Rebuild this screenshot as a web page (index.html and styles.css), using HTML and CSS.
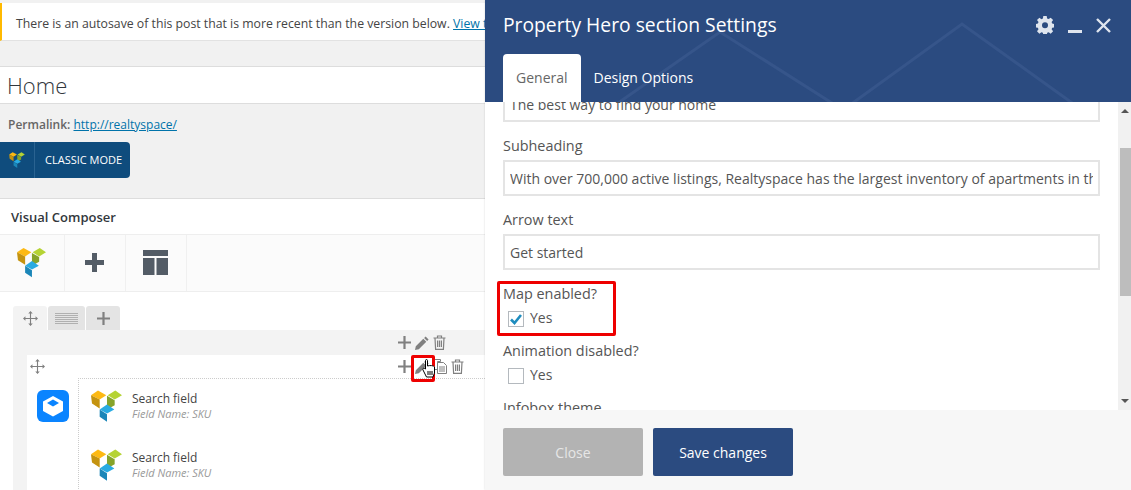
FILE: index.html
```html
<!DOCTYPE html>
<html lang="en">
<head>
    <meta charset="UTF-8">
    <meta name="viewport" content="width=device-width, initial-scale=1.0">
    <title>Edit Page</title>
    <link rel="stylesheet" href="styles.css">
</head>
<body>

    <svg class="defs" width="0" height="0">
        <symbol id="vc" viewBox="0 0 93 95">
            <polygon fill="#fdb913" points="0,15 21,1 46,15 26,28"/>
            <polygon fill="#c4930f" points="0,15 26,28 26,55 3,40"/>
            <polygon fill="#b5d334" points="50,15 73,1 93,15 71,28"/>
            <polygon fill="#86a32a" points="48,17 71,30 71,45 48,58"/>
            <polygon fill="#29abe2" points="26,58 48,43 70,58 48,70"/>
            <polygon fill="#1b86b8" points="26,58 48,72 48,95 26,80"/>
        </symbol>
        <symbol id="move" viewBox="0 0 16 16">
            <path fill="#808080" d="M8 0l2.400 2.600H8.600v4.800h4.800V5.600L16 8l-2.600 2.400V8.600H8.600v4.800h1.800L8 16l-2.400-2.600h1.800V8.600H2.600v1.800L0 8l2.600-2.400v1.800h4.800V2.600H5.600z"/>
        </symbol>
        <symbol id="plus" viewBox="0 0 13 13">
            <path fill="#808080" d="M5.400 0h2.200v5.400H13v2.200H7.600V13H5.400V7.600H0V5.400h5.400z"/>
        </symbol>
        <symbol id="pencil" viewBox="0 0 14 14">
            <path fill="#808080" d="M10.600.4l3 3-1.500 1.500-3-3zM8.300 2.700l3 3-7.500 7.500L0 14l.8-3.800z"/>
        </symbol>
        <symbol id="trash" viewBox="0 0 13 15">
            <path fill="none" stroke="#808080" stroke-width="1.200" d="M.5 3h12M4.500 3V1h4v2M2 3l.6 11.400h7.800L11 3M4.600 5.500v6.500M6.500 5.500v6.500M8.400 5.500v6.500"/>
        </symbol>
        <symbol id="copy" viewBox="0 0 14 15">
            <path fill="#fff" stroke="#808080" d="M.5.500h7v2h-3v8h-4z"/>
            <path fill="#fff" stroke="#808080" d="M4.500 3.500h6l3 3v8h-9z"/>
            <path stroke="#808080" d="M6 8h6M6 10h6M6 12h6"/>
        </symbol>
    </svg>

    <div class="page">
        <div class="notice">There is an autosave of this post that is more recent than the version below. <a href="#">View the autosave</a></div>

        <div class="title-row">Home</div>

        <div class="permalink"><b>Permalink:</b> <a href="#">http://realtyspace/</a></div>

        <div class="mode-wrap">
            <div class="mode-btn">
                <span class="mode-icon"><svg width="16" height="16"><use href="#vc"/></svg></span>
                <span class="mode-text">CLASSIC MODE</span>
            </div>
        </div>

        <div class="composer">
            <div class="composer-head">Visual Composer</div>
            <div class="toolbar">
                <div class="tool"><svg width="29" height="31"><use href="#vc"/></svg></div>
                <div class="tool">
                    <svg width="19" height="19" viewBox="0 0 19 19"><path fill="#535c66" d="M7 0h5v7h7v5h-7v7H7v-7H0V7h7z"/></svg>
                </div>
                <div class="tool">
                    <svg width="25" height="25" viewBox="0 0 25 25"><path fill="#535c66" d="M0 0h25v6H0zM0 8h11.500v17H0zM13.500 8H25v17H13.500z"/></svg>
                </div>
            </div>

            <div class="canvas">
                <div class="row-tabs">
                    <div class="row-tab first"><svg width="15" height="15"><use href="#move"/></svg></div>
                    <div class="row-tab lines"><span></span></div>
                    <div class="row-tab"><svg width="13" height="13"><use href="#plus"/></svg></div>
                </div>
                <div class="row">
                    <div class="actions">
                        <svg width="13" height="13"><use href="#plus"/></svg>
                        <svg width="14" height="14"><use href="#pencil"/></svg>
                        <svg width="13" height="15"><use href="#trash"/></svg>
                    </div>
                    <div class="inner">
                        <div class="inner-top">
                            <svg width="15" height="15"><use href="#move"/></svg>
                            <div class="actions">
                                <svg width="13" height="13"><use href="#plus"/></svg>
                                <svg width="14" height="14"><use href="#pencil"/></svg>
                                <svg width="14" height="15"><use href="#copy"/></svg>
                                <svg width="13" height="15"><use href="#trash"/></svg>
                            </div>
                        </div>
                        <div class="inner-body">
                            <div class="cube-col">
                                <svg width="32" height="32" viewBox="0 0 32 32">
                                    <rect width="32" height="32" rx="6" fill="#0a84ff"/>
                                    <polygon fill="#fff" points="16,6 26,11.500 26,21 16,26.500 6,21 6,11.500"/>
                                    <polygon fill="#0a84ff" points="16,9.500 22,13 16,16.500 10,13"/>
                                </svg>
                            </div>
                            <div class="fields">
                                <div class="field">
                                    <svg width="31" height="32"><use href="#vc"/></svg>
                                    <div>
                                        <div class="field-name">Search field</div>
                                        <div class="field-sub">Field Name: SKU</div>
                                    </div>
                                </div>
                                <div class="field">
                                    <svg width="31" height="32"><use href="#vc"/></svg>
                                    <div>
                                        <div class="field-name">Search field</div>
                                        <div class="field-sub">Field Name: SKU</div>
                                    </div>
                                </div>
                            </div>
                        </div>
                    </div>
                </div>
            </div>
        </div>
    </div>

    <div class="mark mark-edit"></div>
    <svg class="hand" width="14" height="20" viewBox="0 0 14 20">
        <path fill="#fff" stroke="#000" d="M3.500 1.500c0-1.300 2-1.300 2 0v5.500c2-.8 6.500-.6 7 1v6l-1.500 4H4.500L1 11c-.8-1.500.8-2.500 2.500-1z"/>
        <path stroke="#000" d="M6 12v4M8 12v4M10 12v4"/>
    </svg>

    <div class="modal">
        <div class="modal-head">
            <svg class="modal-deco" width="646" height="102" viewBox="0 0 646 102">
                <path fill="none" stroke="#36558a" stroke-width="3" d="M123 110L235 32L358 110L477 24L597 110M358 102V110"/>
            </svg>
            <div class="modal-top">
                <h1>Property Hero section Settings</h1>
                <div class="modal-icons">
                    <svg width="18" height="18" viewBox="0 0 18 18">
                        <path fill="#dfe5ee" fill-rule="evenodd" d="M7.300 0h3.400l.4 2.500 1.500.6L14.700 1.700l2.400 2.400-1.500 2 .6 1.500 2.500.4v3.400l-2.500.4-.6 1.500 1.500 2-2.400 2.400-2-1.500-1.500.6-.4 2.500H7.300l-.4-2.500-1.500-.6-2 1.500-2.400-2.400 1.500-2-.6-1.500-2.500-.4V8l2.500-.4.6-1.500-1.500-2 2.400-2.400 2 1.500 1.500-.6zM9 6.300a3 3 0 1 0 0 6 3 3 0 0 0 0-6z"/>
                    </svg>
                    <span class="minimize"></span>
                    <svg width="15" height="15" viewBox="0 0 15 15"><path fill="none" stroke="#dfe5ee" stroke-width="2.400" d="M1 1l13 13M14 1L1 14"/></svg>
                </div>
            </div>
            <div class="modal-tabs">
                <div class="modal-tab active">General</div>
                <div class="modal-tab">Design Options</div>
            </div>
        </div>

        <div class="modal-body">
            <div class="form">
                <div class="text-input"><span>The best way to find your home</span></div>
                <label class="form-label">Subheading</label>
                <div class="text-input"><span>With over 700,000 active listings, Realtyspace has the largest inventory of apartments in the United States</span></div>
                <label class="form-label">Arrow text</label>
                <div class="text-input"><span>Get started</span></div>
                <label class="form-label">Map enabled?</label>
                <div class="check-row">
                    <span class="check">
                        <svg width="12" height="11" viewBox="0 0 12 11"><path fill="none" stroke="#1e8cbe" stroke-width="2.600" d="M1 5.500l3.500 3.500L11 1"/></svg>
                    </span>
                    Yes
                </div>
                <label class="form-label">Animation disabled?</label>
                <div class="check-row">
                    <span class="check"></span>
                    Yes
                </div>
                <label class="form-label">Infobox theme</label>
            </div>
            <div class="scrollbar">
                <span class="arrow up"></span>
                <span class="track"><span class="thumb"></span></span>
                <span class="arrow down"></span>
            </div>
        </div>

        <div class="modal-foot">
            <button class="btn btn-close">Close</button>
            <button class="btn btn-save">Save changes</button>
        </div>
    </div>

    <div class="mark mark-map"></div>

</body>
</html>
```

FILE: styles.css
```css
* {
    box-sizing: border-box;
}
html, body {
    height: 490px;
}
body {
    margin: 0;
    overflow: hidden;
    position: relative;
    background-color: #f1f1f1;
    font-family: "Open Sans", Arial, sans-serif;
    color: #444;
}
a {
    color: #0073aa;
}
.defs {
    position: absolute;
}
.page {
    width: 485px;
    height: 490px;
    padding-top: 3px;
    overflow: hidden;
}

/* left side, wp editor */
.notice {
    height: 38px;
    padding-left: 14px;
    background-color: #fff;
    border-left: 2px solid #ffb900;
    border-bottom: 1px solid #e2e2e2;
    font-size: 12.280px;
    line-height: 41px;
    white-space: nowrap;
    overflow: hidden;
}
.title-row {
    height: 38px;
    margin-top: 25px;
    padding-left: 7px;
    background-color: #fff;
    border-top: 1px solid #ddd;
    border-bottom: 1px solid #ddd;
    font-size: 22px;
    font-weight: 300;
    line-height: 37px;
    color: #32373c;
}
.permalink {
    margin-top: 12px;
    padding-left: 8px;
    font-size: 12px;
    line-height: 18px;
    color: #666;
}
.permalink b {
    font-weight: 600;
}
.mode-wrap {
    margin-top: 8px;
    height: 57px;
    border-bottom: 1px solid #ddd;
}
.mode-btn {
    display: flex;
    width: 130px;
    height: 36px;
    background-color: #0f4c7d;
    border-radius: 0 4px 4px 0;
    color: #fff;
}
.mode-icon {
    display: flex;
    align-items: center;
    justify-content: center;
    width: 35px;
    border-right: 1px solid #2a6391;
}
.mode-text {
    padding-left: 10px;
    font-size: 11px;
    line-height: 36px;
}
.composer {
    background-color: #fff;
}
.composer-head {
    height: 35px;
    padding-left: 11px;
    font-size: 13px;
    font-weight: 600;
    line-height: 36px;
    color: #32373c;
}
.toolbar {
    display: flex;
    height: 58px;
    background-color: #fbfbfb;
    border-top: 1px solid #eee;
    border-bottom: 1px solid #eee;
}
.tool {
    display: flex;
    align-items: center;
    justify-content: center;
    width: 61px;
    padding: 0 1px 1px 0;
    border-right: 1px solid #f0f0f0;
}
.tool:first-child {
    width: 65px;
}
.canvas {
    height: 198px;
    padding: 14px 0 0 13px;
}
.row-tabs {
    display: flex;
    gap: 1px;
    height: 24px;
}
.row-tab {
    display: flex;
    align-items: center;
    justify-content: center;
    width: 34px;
    background-color: #e4e4e4;
    border-radius: 3px 3px 0 0;
}
.row-tab.first {
    background-color: #f3f3f3;
}
.row-tab.lines {
    width: 37px;
}
.row-tab.lines span {
    width: 23px;
    height: 11px;
    background: repeating-linear-gradient(#b0b0b0 0 1px, transparent 1px 2px);
}
.row {
    height: 175px;
    padding-left: 14px;
    background-color: #f3f3f3;
}
.actions {
    display: flex;
    align-items: center;
    gap: 4px;
    height: 25px;
    padding-left: 371px;
}
.inner {
    height: 150px;
    background-color: #fff;
}
.inner-top {
    display: flex;
    align-items: center;
    height: 23px;
    padding-left: 3px;
}
.inner-top .actions {
    padding-left: 353px;
}
.inner-body {
    display: flex;
}
.cube-col {
    width: 51px;
    padding: 12px 0 0 10px;
}
.fields {
    flex: 1;
    height: 127px;
    padding: 11px 0 0 12px;
    border-top: 1px dotted #ccc;
    border-left: 1px dotted #ccc;
}
.field {
    display: flex;
    gap: 10px;
    height: 59px;
}
.field-name {
    font-size: 12px;
    line-height: 17px;
    color: #444;
}
.field-sub {
    font-size: 11px;
    font-style: italic;
    line-height: 13px;
    color: #999;
}

/* settings window */
.modal {
    position: absolute;
    top: 0;
    left: 485px;
    display: flex;
    flex-direction: column;
    width: 646px;
    height: 490px;
    background-color: #fff;
    box-shadow: 0 0 2px rgba(0, 0, 0, .15);
}
.modal-head {
    position: relative;
    height: 102px;
    padding: 0 18px;
    background-color: #2b4b80;
    color: #fff;
}
.modal-deco {
    position: absolute;
    top: 0;
    left: 0;
}
.modal-top {
    position: relative;
    display: flex;
    align-items: center;
    justify-content: space-between;
    height: 54px;
}
.modal-top h1 {
    margin: 0 0 5px;
    font-size: 19.300px;
    font-weight: 400;
}
.modal-icons {
    display: flex;
    align-items: center;
    gap: 14px;
    margin-bottom: 4px;
    margin-right: 2px;
}
.minimize {
    width: 14px;
    height: 3px;
    margin-top: 12px;
    background-color: #dfe5ee;
}
.modal-tabs {
    position: relative;
    display: flex;
    height: 48px;
}
.modal-tab {
    padding: 0 13px;
    font-size: 14px;
    font-weight: 500;
    line-height: 48px;
}
.modal-tab.active {
    background-color: #fff;
    border-radius: 4px 4px 0 0;
    font-weight: 400;
    color: #666;
}
.modal-body {
    display: flex;
    height: 308px;
    overflow: hidden;
}
.form {
    flex: 1;
    min-width: 0;
    padding: 0 18px;
    margin-top: -16px;
}
.text-input {
    height: 36px;
    padding: 0 5px;
    border: 2px solid #e4e4e4;
    font-size: 14px;
    line-height: 34px;
    color: #555;
}
.text-input span {
    display: block;
    overflow: hidden;
    white-space: nowrap;
}
.form-label {
    display: block;
    margin-top: 14px;
    margin-bottom: 4px;
    font-size: 14.400px;
    line-height: 20px;
    color: #555;
}
.check-row {
    display: flex;
    align-items: center;
    gap: 6px;
    height: 19px;
    padding-left: 5px;
    font-size: 14px;
    color: #555;
}
.check {
    display: flex;
    align-items: center;
    justify-content: center;
    width: 16px;
    height: 16px;
    margin-top: 3px;
    border: 1px solid #b4b9be;
}
.scrollbar {
    display: flex;
    flex-direction: column;
    width: 13px;
    background-color: #f1f1f1;
}
.arrow {
    display: block;
    margin: 0 auto;
    border-left: 4px solid transparent;
    border-right: 4px solid transparent;
}
.arrow.up {
    height: 0;
    margin: 7px auto 6px;
    border-bottom: 4px solid #555;
}
.arrow.down {
    height: 0;
    margin: 6px auto 7px;
    border-top: 4px solid #555;
}
.track {
    flex: 1;
}
.thumb {
    display: block;
    height: 148px;
    margin: 29px 0 0 2px;
    background-color: #bdbdbd;
}
.modal-foot {
    display: flex;
    gap: 10px;
    height: 80px;
    padding: 18px 18px 0;
    background-color: #f7f7f7;
}
.btn {
    width: 140px;
    height: 48px;
    border: none;
    border-radius: 2px;
    font-family: inherit;
    font-size: 14px;
    color: #fff;
}
.btn-close {
    background-color: #b3b3b3;
    color: #e6e6e6;
}
.btn-save {
    background-color: #2b4b80;
}

/* red annotation boxes drawn on top of the screenshot */
.mark {
    position: absolute;
    border: 3px solid #e00;
    border-radius: 2px;
}
.mark-map {
    top: 281px;
    left: 497px;
    width: 119px;
    height: 55px;
}
.mark-edit {
    top: 355px;
    left: 411px;
    width: 24px;
    height: 27px;
}
.hand {
    position: absolute;
    top: 359px;
    left: 422px;
}
```
